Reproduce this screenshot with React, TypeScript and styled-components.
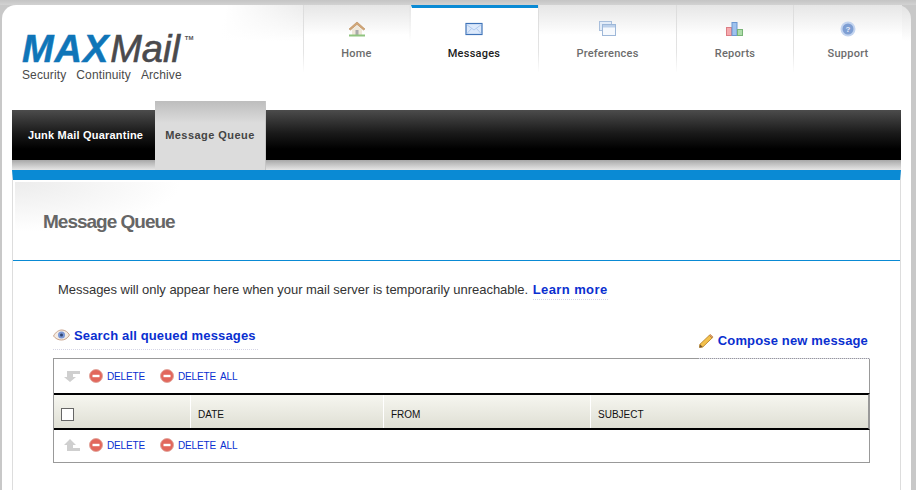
import React from 'react';
import styled, { createGlobalStyle } from 'styled-components';

const GlobalStyle = createGlobalStyle`
  html, body { margin: 0; padding: 0; height: 100%; overflow: hidden; }
  body { font-family: "Liberation Sans", Arial, sans-serif; background: #c9c9c9; }
`;

const Page = styled.div`
  width: 916px;
  height: 490px;
  padding: 5px 5px 0 2px;
  box-sizing: border-box;
  overflow: hidden;
  background: linear-gradient(#c4c4c4, #d2d2d2 5px, #c8c8c8 5px);
`;

const Card = styled.div`
  height: 485px;
  padding: 0 10px;
  box-sizing: border-box;
  border-radius: 14px 14px 0 0;
  background:
    linear-gradient(103deg, #fff 22%, rgba(255, 255, 255, 0) 33%),
    linear-gradient(#e3e3e3, #fff 36px) no-repeat;
  background-color: #fff;
`;

const Header = styled.header`
  height: 96px;
  display: flex;
  justify-content: space-between;
`;

const Logo = styled.div`
  padding: 25px 0 0 10px;
  width: 200px;
`;

const LogoMark = styled.div`
  display: flex;
  align-items: flex-start;
  height: 38px;
  line-height: 38px;
  font-size: 38px;
  font-style: italic;
`;

const LogoMax = styled.span`
  color: #0f75b8;
  font-weight: 700;
  letter-spacing: 0.9px;
  margin-right: 1px;
  -webkit-text-stroke: 0.5px #0f75b8;
`;

const LogoMail = styled.span`
  color: #4a4a4d;
  -webkit-text-stroke: 0.6px #4a4a4d;
`;

const LogoTm = styled.span`
  color: #555;
  font-size: 6px;
  font-style: normal;
  font-weight: 700;
  line-height: 6px;
  margin: 5px 0 0 5px;
`;

const LogoTag = styled.div`
  display: flex;
  gap: 10px;
  font-size: 12px;
  line-height: 14px;
  color: #4a4a4a;
  letter-spacing: 0.12px;
`;

const Nav = styled.nav`
  display: flex;
  margin-right: -1px;
`;

const NavItem = styled.a<{ $width: number; $active?: boolean }>`
  width: ${({ $width }) => $width}px;
  height: 67px;
  box-sizing: border-box;
  display: flex;
  flex-direction: column;
  align-items: center;
  padding-top: ${({ $active }) => ($active ? '13px' : '16px')};
  ${({ $active }) => $active && 'margin-left: 2px; padding-right: 2px;'}
  gap: 9px;
  font-family: Roboto, "Noto Sans", sans-serif;
  font-size: 11px;
  font-weight: 500;
  line-height: 16px;
  letter-spacing: 0.25px;
  color: ${({ $active }) => ($active ? '#1c1c1c' : '#6c6c6c')};
  border-left: 1px solid transparent;
  border-image: ${({ $active }) =>
    $active ? 'none' : 'linear-gradient(#dcdcdc, #e4e4e4 70%, rgba(255,255,255,0)) 1'};
  background: ${({ $active }) =>
    $active ? '#fff' : 'linear-gradient(#e6e6e6, #fff 30px)'};
  border-top: ${({ $active }) => ($active ? '3px solid #0a8ad4' : 'none')};
`;

const SubNav = styled.div`
  height: 69px;
  display: flex;
  background: linear-gradient(
    #fff 9px,
    #4c4c4c 9px,
    #1a1a1a 32px,
    #000 48px,
    #000 59px,
    #a8a8a8 59px,
    #e6e6e6 69px
  );
`;

const SubTab = styled.a<{ $active?: boolean }>`
  box-sizing: border-box;
  display: flex;
  align-items: center;
  justify-content: center;
  height: 69px;
  width: ${({ $active }) => ($active ? '111px' : '143px')};
  padding: ${({ $active }) => ($active ? '0 0 1px' : '0 0 1px 4px')};
  font-size: 11px;
  font-weight: 700;
  letter-spacing: ${({ $active }) => ($active ? '0.45px' : '0.2px')};
  color: ${({ $active }) => ($active ? '#444' : '#fff')};
  ${({ $active }) =>
    $active &&
    `background: linear-gradient(#bdbdbd, #dcdcdc 22px);
     border-right: 1px solid #c6c6c6;`}
`;

const Panel = styled.main`
  border-top: 10px solid #0a8ad4;
  border-left: 1px solid #ddd;
  border-right: 1px solid #ddd;
  height: 310px;
`;

const TitleBlock = styled.div`
  height: 81px;
  box-sizing: border-box;
  padding: 30px 0 0 30px;
  border-bottom: 1px solid #0a8ad4;
  background: radial-gradient(ellipse 166px 50px at 0 0, #ececec, #fff) 2px 2px / 166px 50px no-repeat;
`;

const PageTitle = styled.h1`
  margin: 0;
  font-size: 19px;
  line-height: 24px;
  font-weight: 700;
  letter-spacing: -1px;
  color: #666;
`;

const Notice = styled.p`
  margin: 0;
  padding: 20px 0 0 45px;
  font-size: 13px;
  line-height: 18px;
  letter-spacing: -0.03px;
  color: #333;
`;

const TextLink = styled.a`
  color: #0a2fd0;
  font-weight: 700;
  letter-spacing: 0.4px;
  margin-left: 1px;
  padding-bottom: 2px;
  border-bottom: 1px dotted #d5d5e5;
`;

const ActionRow = styled.div`
  display: flex;
  justify-content: space-between;
  align-items: flex-start;
  margin: 25px 30px 0 40px;
  height: 34px;
`;

const ActionLink = styled.a<{ $offset?: number; $drop?: number }>`
  display: flex;
  align-items: center;
  gap: 4px;
  height: 22px;
  margin-top: ${({ $offset }) => $offset ?? 0}px;
  padding: 0 2px ${({ $drop }) => $drop ?? 3}px 0;
  font-size: 13px;
  font-weight: 700;
  letter-spacing: 0.15px;
  color: #0a2fd0;
  border-bottom: 1px dotted #d5d5e5;
`;

const Grid = styled.section`
  border: 1px solid #999;
  height: 105px;
  margin: 0 30px 0 40px;
  box-sizing: border-box;
`;

const Toolbar = styled.div<{ $height: number; $lift?: number }>`
  height: ${({ $height }) => $height}px;
  box-sizing: border-box;
  display: flex;
  align-items: center;
  padding: 0 0 ${({ $lift }) => $lift ?? 0}px 10px;
`;

const ArrowSlot = styled.span`
  display: flex;
  width: 25px;
`;

const DeleteAction = styled.a`
  display: flex;
  align-items: center;
  gap: 4px;
  margin-right: 15px;
  color: #0a2fd0;
  font-size: 10px;
  letter-spacing: -0.15px;
  word-spacing: 2px;
`;

const HeaderRow = styled.div`
  display: grid;
  grid-template-columns: 136px 193px 207px 1fr;
  height: 37px;
  box-sizing: border-box;
  border-top: 2px solid #000;
  border-bottom: 2px solid #000;
  border-right: 2px solid #999;
  margin-right: -1px;
  background: linear-gradient(#f6f6f0, #dfdfd4);
`;

const HeaderCell = styled.div`
  display: flex;
  align-items: center;
  padding: 6px 0 0 7px;
  font-size: 10px;
  color: #111;
  &:not(:first-child) { border-left: 1px solid #fff; }
`;

const CheckBox = styled.span`
  width: 11px;
  height: 11px;
  border: 1px solid #666;
  background: #fff;
`;

const HomeIcon = () => (
  <svg width="18" height="16" viewBox="0 0 18 16">
    <path d="M1 8 9 1l8 7-1.500 1L9 3.500 2.500 9z" fill="#d2a778" stroke="#b98a58" strokeWidth=".6" />
    <path d="M4 8.500 9 4.500l5 4V14H4z" fill="#efe8da" />
    <rect x="7.500" y="9" width="3" height="5" fill="#aaa" />
    <rect x="1" y="13.500" width="16" height="2" fill="#8fc47f" />
  </svg>
);

const MailIcon = () => (
  <svg width="18" height="16" viewBox="0 0 18 16">
    <rect x="1" y="2.500" width="16" height="11" fill="#dce9fb" stroke="#3f73b8" strokeWidth="1.200" />
    <path d="M1.500 3.500 9 9l7.500-5.500M1.500 13l5-5.500M16.500 13l-5-5.500" fill="none" stroke="#a6c3ec" strokeWidth=".8" />
  </svg>
);

const WindowsIcon = () => (
  <svg width="18" height="16" viewBox="0 0 18 16">
    <rect x=".5" y=".5" width="12" height="9" fill="#e3ecf8" stroke="#a9bfdc" />
    <rect x="3.500" y="3.500" width="13" height="11" fill="#f6f9fd" stroke="#9db7d8" />
    <rect x="4" y="4" width="12" height="2.500" fill="#bcd0ea" />
  </svg>
);

const ChartIcon = () => (
  <svg width="18" height="16" viewBox="0 0 18 16">
    <rect x=".5" y="6.500" width="5" height="8" fill="#f5a9ad" stroke="#dc7d84" />
    <rect x="6" y="1.500" width="5" height="13" fill="#9fc2ee" stroke="#6c97d2" />
    <rect x="11.500" y="8.500" width="5" height="6" fill="#aeddaa" stroke="#79b477" />
  </svg>
);

const HelpIcon = () => (
  <svg width="16" height="16" viewBox="0 0 16 16">
    <circle cx="8" cy="8" r="7.500" fill="#c3d4ef" />
    <circle cx="8" cy="8" r="5.500" fill="#7f9fd3" />
    <text x="8" y="11" textAnchor="middle" fontSize="8" fontWeight="700" fill="#e8eefa" fontFamily="Liberation Sans">?</text>
  </svg>
);

const EyeIcon = () => (
  <svg width="17" height="13" viewBox="0 0 17 13">
    <path d="M.5 7C3 2.500 6 1 9 1c3 0 6 2 7.500 5-2 3.500-5 5-8 5-3.500 0-6-1.500-8-4z" fill="#f4ece4" stroke="#c9a38c" />
    <circle cx="8.500" cy="6" r="3.500" fill="#7b97d6" />
    <circle cx="8.500" cy="6" r="1.500" fill="#33456f" />
  </svg>
);

const PencilIcon = () => (
  <svg width="15" height="15" viewBox="0 0 16 15">
    <path d="M1 11.500 11 2l3 2.800-10 9.700L.5 15z" fill="#f3c14c" stroke="#b5812a" strokeWidth=".9" />
    <path d="M11 2l1-1 3 2.700-1 1.100z" fill="#e59a7f" stroke="#b5812a" strokeWidth=".7" />
    <path d="M1 11.500l3 3L.5 15z" fill="#7a5a30" />
  </svg>
);

const MinusIcon = () => (
  <svg width="14" height="14" viewBox="0 0 14 14">
    <circle cx="7" cy="7" r="6.500" fill="#e2675c" stroke="#e0a49b" strokeWidth=".9" />
    <rect x="3.500" y="5.800" width="7" height="2.400" fill="#fff" />
  </svg>
);

const ArrowDownIcon = () => (
  <svg width="16" height="14" viewBox="0 0 16 14">
    <path d="M16 2v3H9v3h3l-6 5-6-5h3V2z" fill="#cfcfcf" />
  </svg>
);

const ArrowUpIcon = () => (
  <svg width="16" height="13" viewBox="0 0 16 13">
    <path d="M16 12V9H9V6h3L6 0 0 6h3v6z" fill="#cfcfcf" />
  </svg>
);

const navItems = [
  { label: 'Home', width: 106, icon: <HomeIcon /> },
  { label: 'Messages', width: 127, icon: <MailIcon />, active: true },
  { label: 'Preferences', width: 138, icon: <WindowsIcon /> },
  { label: 'Reports', width: 117, icon: <ChartIcon /> },
  { label: 'Support', width: 109, icon: <HelpIcon /> },
];

const columns = ['DATE', 'FROM', 'SUBJECT'];

const DeleteActions = () => (
  <>
    <DeleteAction><MinusIcon />DELETE</DeleteAction>
    <DeleteAction><MinusIcon />DELETE ALL</DeleteAction>
  </>
);

const App: React.FC = () => {
  return (
    <Page>
      <GlobalStyle />
      <Card>
        <Header>
          <Logo>
            <LogoMark>
              <LogoMax>MAX</LogoMax>
              <LogoMail>Mail</LogoMail>
              <LogoTm>TM</LogoTm>
            </LogoMark>
            <LogoTag>
              <span>Security</span>
              <span>Continuity</span>
              <span>Archive</span>
            </LogoTag>
          </Logo>
          <Nav>
            {navItems.map((item) => (
              <NavItem key={item.label} $width={item.width} $active={item.active}>
                {item.icon}
                {item.label}
              </NavItem>
            ))}
          </Nav>
        </Header>
        <SubNav>
          <SubTab>Junk Mail Quarantine</SubTab>
          <SubTab $active>Message Queue</SubTab>
        </SubNav>
        <Panel>
          <TitleBlock>
            <PageTitle>Message Queue</PageTitle>
          </TitleBlock>
          <Notice>
            Messages will only appear here when your mail server is temporarily unreachable.{' '}
            <TextLink>Learn more</TextLink>
          </Notice>
          <ActionRow>
            <ActionLink><EyeIcon />Search all queued messages</ActionLink>
            <ActionLink $offset={5} $drop={7}><PencilIcon />Compose new message</ActionLink>
          </ActionRow>
          <Grid>
            <Toolbar $height={34}>
              <ArrowSlot><ArrowDownIcon /></ArrowSlot>
              <DeleteActions />
            </Toolbar>
            <HeaderRow>
              <HeaderCell><CheckBox /></HeaderCell>
              {columns.map((column) => (
                <HeaderCell key={column}>{column}</HeaderCell>
              ))}
            </HeaderRow>
            <Toolbar $height={32} $lift={2}>
              <ArrowSlot><ArrowUpIcon /></ArrowSlot>
              <DeleteActions />
            </Toolbar>
          </Grid>
        </Panel>
      </Card>
    </Page>
  );
};

export default App;
